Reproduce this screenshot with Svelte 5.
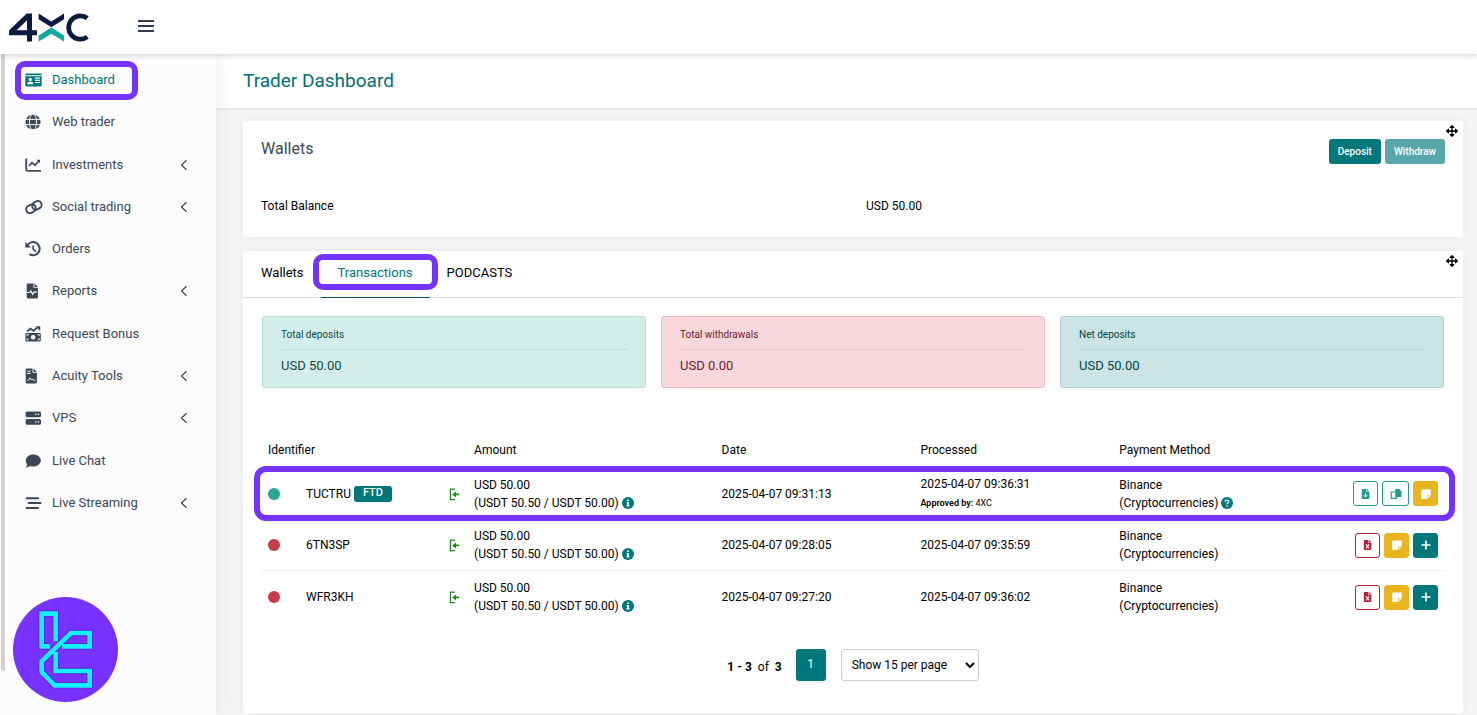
<script>
  const menu = [
    { label: 'Dashboard', icon: 'card', active: true },
    { label: 'Web trader', icon: 'globe' },
    { label: 'Investments', icon: 'chart', sub: true },
    { label: 'Social trading', icon: 'link', sub: true },
    { label: 'Orders', icon: 'history' },
    { label: 'Reports', icon: 'report', sub: true },
    { label: 'Request Bonus', icon: 'bonus' },
    { label: 'Acuity Tools', icon: 'contract', sub: true },
    { label: 'VPS', icon: 'server', sub: true },
    { label: 'Live Chat', icon: 'chat' },
    { label: 'Live Streaming', icon: 'lines', sub: true }
  ];
  const stats = [
    { label: 'Total deposits', value: 'USD 50.00', tone: 'green' },
    { label: 'Total withdrawals', value: 'USD 0.00', tone: 'red' },
    { label: 'Net deposits', value: 'USD 50.00', tone: 'teal' }
  ];
  const rows = [
    { id: 'TUCTRU', ok: true, date: '2025-04-07 09:31:13', processed: '2025-04-07 09:36:31', actions: ['download', 'copy', 'note'] },
    { id: '6TN3SP', date: '2025-04-07 09:28:05', processed: '2025-04-07 09:35:59', actions: ['cancel', 'note', 'add'] },
    { id: 'WFR3KH', date: '2025-04-07 09:27:20', processed: '2025-04-07 09:36:02', actions: ['cancel', 'note', 'add'] }
  ];
  const tabs = ['Wallets', 'Transactions', 'PODCASTS'];
  let tab = $state('Transactions');
</script>

{#snippet menuIcon(name)}
  <svg class="mi" viewBox="0 0 18 18" aria-hidden="true">
    {#if name === 'card'}
      <path fill="currentColor" d="M1.5 2.5h14a1.2 1.2 0 0 1 1.2 1.2v.6H.3v-.6a1.2 1.2 0 0 1 1.2-1.2zM.3 5.2h16.4v9a1.2 1.2 0 0 1-1.2 1.2h-14a1.2 1.2 0 0 1-1.2-1.2z" />
      <path fill="#fff" d="M10 6.6h4.8v1.1H10zM10 8.8h4.8v1.1H10zM10 11h4.8v1.1H10zM2.3 13.2c0-1.6 1-2.4 2.2-2.4h1.6c1.2 0 2.2.8 2.2 2.4z" />
      <circle cx="5.3" cy="8.5" r="1.7" fill="#fff" />
    {:else if name === 'globe'}
      <circle cx="8" cy="9" r="7.6" fill="currentColor" />
      <g fill="none" stroke="#fcfcfc" stroke-width="1"><ellipse cx="8" cy="9" rx="3.6" ry="8" /><path d="M0 6.4h16M0 11.6h16" /></g>
    {:else if name === 'chart'}
      <g fill="none" stroke="currentColor" stroke-width="1.8"><path d="M1.2 2.5v11q0 1.3 1.3 1.3H16" /><path stroke-width="1.7" d="M4 10l3-3.4 3 2.6 3.6-4" /></g>
      <path fill="currentColor" d="M11.6 3.8h3.4v3.4z" />
    {:else if name === 'link'}
      <g fill="none" stroke="currentColor" stroke-width="1.9" transform="rotate(-30 9 9)"><rect x=".6" y="5.200" width="9.800" height="7.600" rx="3.800" /><rect x="7.400" y="5.200" width="9.800" height="7.600" rx="3.800" /></g>
    {:else if name === 'history'}
      <g fill="none" stroke="currentColor" stroke-width="2"><path d="M2.2 5.6A6.6 6.6 0 1 1 4.4 14.2" /><path stroke-width="1.6" d="M8.2 5.4v4l2.8 2.2" /></g>
      <path fill="currentColor" d="M.3 2v5.6h5.6z" />
    {:else if name === 'report'}
      <path fill="currentColor" d="M3 1.5h5.5v4.3h4.4v9.5A1.3 1.3 0 0 1 11.6 16.6H3a1.3 1.3 0 0 1-1.3-1.3V2.8A1.3 1.3 0 0 1 3 1.5zM9.4 1.5l3.5 3.4H9.4z" />
      <path fill="none" stroke="#fcfcfc" stroke-width="1.2" d="M1.6 10.5h3l1.2-1.7 1.8 3.4 1.3-2h3" />
    {:else if name === 'bonus'}
      <path fill="none" stroke="currentColor" stroke-width="1.8" d="M2 6.4L5.4 3.6l3 2.2L12.6 2.4" />
      <path fill="currentColor" d="M10.5 1.2h4.7V6zM1.6 8h13a1.2 1.2 0 0 1 1.2 1.2v6a1.2 1.2 0 0 1-1.2 1.2h-13A1.2 1.2 0 0 1 .4 15.2V9.2A1.2 1.2 0 0 1 1.6 8z" />
      <circle cx="8.1" cy="12.2" r="2.3" fill="#fcfcfc" />
      <path fill="none" stroke="#fcfcfc" d="M2 11.2v-1.600h1.600M14.200 11.200v-1.600h-1.600M2 13.200v1.600h1.600M14.200 13.200v1.600h-1.600" />
    {:else if name === 'contract'}
      <path fill="currentColor" d="M2 1.500h5.500v4.300h4.400v9.500A1.300 1.300 0 0 1 10.600 16.600H2A1.300 1.300 0 0 1 .700 15.300V2.800A1.300 1.300 0 0 1 2 1.500zM8.400 1.500l3.500 3.400H8.400z" />
      <path fill="none" stroke="#fcfcfc" stroke-width="1" d="M2.200 4.200h3.400M2.200 6.400h3.400M2.400 13.300h1.200l1.400-2.400 1.600 2 1.200-.8 1 1.200h1.400" />
    {:else if name === 'server'}
      <rect x=".6" y="2.500" width="15.400" height="5.800" rx="1.500" fill="currentColor" />
      <rect x=".6" y="10" width="15.400" height="5.800" rx="1.500" fill="currentColor" />
      <path fill="#fcfcfc" d="M10.200 4.800h1.400v1.200h-1.400zM12.800 4.800h1.400v1.200h-1.400zM10.200 12.300h1.400v1.200h-1.400zM12.800 12.300h1.400v1.200h-1.400z" />
    {:else if name === 'chat'}
      <path fill="currentColor" d="M8.300 2.600c4.200 0 7.500 2.700 7.500 6s-3.300 6-7.500 6c-1.300 0-2.400-.2-3.400-.6-.9.700-2.400 1.500-4.400 1.500.900-1 1.700-2.200 1.800-3.200C1.300 11.300.8 10 .8 8.600c0-3.300 3.300-6 7.500-6z" />
    {:else}
      <path fill="none" stroke="currentColor" stroke-width="1.900" stroke-linecap="round" d="M1.600 4.200h11.600M3.600 9h12M1.600 14h11.600" />
    {/if}
  </svg>
{/snippet}

{#snippet actionIcon(name)}
  <svg class="ai" viewBox="0 0 12 12" aria-hidden="true">
    {#if name === 'download'}
      <path fill="currentColor" d="M2.800 1h3.600v3h3v6a1 1 0 0 1-1 1H2.800a1 1 0 0 1-1-1V2a1 1 0 0 1 1-1zM7 1l2.400 2.400H7z" />
      <path fill="none" stroke="#fff" stroke-width="1" d="M5.600 5v3.800M3.900 7.200l1.700 1.700 1.700-1.700" />
    {:else if name === 'copy'}
      <path fill="currentColor" d="M6 1h3.200L11.500 3.200v4.900a.8.8 0 0 1-.8.8H6a.8.8 0 0 1-.8-.8V1.800A.8.8 0 0 1 6 1z" />
      <path fill="none" stroke="currentColor" stroke-width="1.200" d="M5 4H1.200v6.400h5.200V8.800" />
    {:else if name === 'note'}
      <path fill="currentColor" d="M2.200 1.400h7.600a1 1 0 0 1 1 1V7H7.800a.8.8 0 0 0-.8.8v3.100H2.200a1 1 0 0 1-1-1V2.400a1 1 0 0 1 1-1zM10.800 7.600L7.700 10.700V7.600z" />
    {:else if name === 'cancel'}
      <path fill="currentColor" d="M2.800 1h3.600v3h3v6a1 1 0 0 1-1 1H2.800a1 1 0 0 1-1-1V2a1 1 0 0 1 1-1zM7 1l2.400 2.400H7z" />
      <path fill="none" stroke="#fff" stroke-width="1.100" d="M4 5.400l3.200 4M7.200 5.400L4 9.400" />
    {:else}
      <path fill="none" stroke="currentColor" stroke-width="1.600" d="M6 1.500v9M1.500 6h9" />
    {/if}
  </svg>
{/snippet}

{#snippet move()}
  <svg class="move" viewBox="0 0 512 512" aria-hidden="true"><path d="M352.201 425.775l-79.196 79.196c-9.373 9.373-24.568 9.373-33.941 0l-79.196-79.196c-15.119-15.119-4.411-40.971 16.971-40.970h51.162L228 284H127.196v51.162c0 21.382-25.851 32.090-40.971 16.971L7.029 272.937c-9.373-9.373-9.373-24.569 0-33.941L86.225 159.800c15.119-15.119 40.971-4.411 40.971 16.971V228H228V127.196h-51.230c-21.382 0-32.090-25.851-16.971-40.971l79.196-79.196c9.373-9.373 24.568-9.373 33.941 0l79.196 79.196c15.119 15.119 4.411 40.971-16.971 40.971h-51.162V228h100.804v-51.162c0-21.382 25.851-32.090 40.970-16.971l79.196 79.196c9.373 9.373 9.373 24.569 0 33.941L425.773 352.200c-15.119 15.119-40.971 4.411-40.970-16.971V284H284v100.804h51.230c21.382 0 32.090 25.851 16.971 40.971z" /></svg>
{/snippet}

<div class="app">
  <header>
    <a href="#home" aria-label="4XC home">
      <svg class="logo" viewBox="24 36 246 92" aria-hidden="true">
        <path fill="#0b1b3f" fill-rule="evenodd" d="M27 91L80 40h16v50h15v15H96v19H81v-19H27zM81 60L50 90h31z" />
        <path fill="#0b1b3f" d="M116 40l38 24 38-24v17l-38 24-38-24z" />
        <path fill="#0fa8a0" d="M116 124v-18l38-24 38 24v18l-38-23z" />
        <path fill="none" stroke="#0b1b3f" stroke-width="14" d="M262 54A35 35 0 1 0 262 110" />
      </svg>
    </a>
    <button class="burger" aria-label="Toggle menu"><span></span><span></span><span></span></button>
  </header>

  <div class="body">
    <nav>
      <i class="scroll"></i>
      <ul>
        {#each menu as m}
          <li>
            <a href="#menu" class:active={m.active}>
              {@render menuIcon(m.icon)}
              <span>{m.label}</span>
              {#if m.sub}<svg class="chev" viewBox="0 0 8 12" aria-hidden="true"><path fill="none" stroke="currentColor" stroke-width="1.200" d="M6.500 1.200L1.500 6l5 4.800" /></svg>{/if}
            </a>
          </li>
        {/each}
      </ul>
      <svg class="badge" viewBox="39 51 315 315" aria-hidden="true">
        <circle cx="196.500" cy="208.500" r="157.500" fill="#7832ff" />
        <g fill="none" stroke="#5a22d8" stroke-width="19">
          <path d="M167 180V101H125V199H146" /><path d="M188 199H269V159H213L125 244V276L164 316H269V273H167V218" />
        </g>
        <g fill="none" stroke="#14f0ff" stroke-width="14">
          <path d="M167 184V101H125V199H150" /><path d="M186 199H269V159H213L125 244V276L164 316H269V273H167V216" />
        </g>
      </svg>
    </nav>

    <main>
      <h1>Trader Dashboard</h1>
      <div class="content">
        <section class="card wallets">
          {@render move()}
          <div class="top">
            <h2>Wallets</h2>
            <div class="btns"><button>Deposit</button><button class="soft">Withdraw</button></div>
          </div>
          <div class="balance"><span>Total Balance</span><span>USD 50.00</span></div>
        </section>

        <section class="card">
          {@render move()}
          <div class="tabs" role="tablist">
            {#each tabs as t}
              <button role="tab" aria-selected={tab === t} class:on={tab === t} onclick={() => (tab = t)}>{t}</button>
            {/each}
          </div>
          <div class="pane">
            <div class="stats">
              {#each stats as s}
                <div class="stat {s.tone}"><small>{s.label}</small><strong>{s.value}</strong></div>
              {/each}
            </div>
            <table>
              <colgroup><col class="c-dot" /><col class="c-id" /><col class="c-in" /><col class="c-amt" /><col class="c-date" /><col class="c-date" /><col /><col class="c-act" /></colgroup>
              <thead>
                <tr><th colspan="3">Identifier</th><th>Amount</th><th>Date</th><th>Processed</th><th colspan="2">Payment Method</th></tr>
              </thead>
              <tbody>
                {#each rows as r}
                  <tr class:marked={r.ok}>
                    <td><i class="dot" class:ok={r.ok}></i></td>
                    <td>{r.id}{#if r.ok}&nbsp;<b class="ftd">FTD</b>{/if}</td>
                    <td><svg class="in" viewBox="0 0 11 13" aria-hidden="true"><path fill="none" stroke="#1d8a1d" stroke-width="1.200" d="M6 1.200H1.400v10.400H6" /><path fill="#1d8a1d" d="M3.200 6.400L7 3.400v2.200h3v1.700H7v2.200z" /></svg></td>
                    <td>USD 50.00<br />(USDT 50.50 / USDT 50.00)
                      <svg class="info" viewBox="0 0 12 12" aria-hidden="true"><circle cx="6" cy="6" r="6" fill="#00777b" /><path fill="#fff" d="M5.200 2.500h1.700v1.500H5.200zM4.500 5h2.400v3.300h.700v1.100H4.400V8.300h.8V6.100h-.7z" /></svg></td>
                    <td>{r.date}</td>
                    <td>{r.processed}{#if r.ok}<br /><small><b>Approved by:</b> 4XC</small>{/if}</td>
                    <td>Binance<br />(Cryptocurrencies)
                      {#if r.ok}<svg class="info" viewBox="0 0 12 12" aria-hidden="true"><circle cx="6" cy="6" r="6" fill="#00777b" /><path fill="none" stroke="#fff" stroke-width="1.300" d="M4.200 4.700c0-2 3.600-2 3.600 0C7.800 5.900 6 5.800 6 7.200" /><circle cx="6" cy="9" r=".8" fill="#fff" /></svg>{/if}</td>
                    <td><div class="acts">
                      {#each r.actions as a}<button class={a} aria-label={a}>{@render actionIcon(a)}</button>{/each}
                    </div></td>
                  </tr>
                {/each}
              </tbody>
            </table>
            <div class="pager">
              <span><b>1 - 3</b>&nbsp; of &nbsp;<b>3</b></span>
              <button class="page">1</button>
              <select aria-label="Rows per page"><option>Show 15 per page</option></select>
            </div>
          </div>
        </section>
      </div>
    </main>
  </div>
</div>

<style>
  :global(body) { margin: 0; background: #f5f5f5; overflow: hidden; }
  .app { display: flex; flex-direction: column; min-height: 100vh; font: 12px/18px Roboto, sans-serif; color: #000; }
  button, select { font: inherit; margin: 0; cursor: pointer; }
  header { display: flex; align-items: center; gap: 48px; height: 54px; padding-left: 8px; background: #fff; box-shadow: 0 1px 6px rgba(0, 0, 0, .2); position: relative; z-index: 2; }
  .logo { display: block; width: 82px; height: 31px; }
  .burger { display: flex; flex-direction: column; justify-content: space-between; width: 16px; height: 12px; padding: 0; border: 0; background: none; margin-bottom: 2px; }
  .burger span { height: 2px; background: #323b54; }
  .body { display: flex; flex: 1; }

  nav { position: relative; flex: 0 0 216px; background: #fcfcfc; box-shadow: 0 0 20px rgba(0, 0, 0, .08); z-index: 1; }
  .scroll { position: absolute; left: 1px; top: 0; width: 4px; height: 617px; background: #d2d2d2; border-radius: 0 0 2px 2px; }
  ul { list-style: none; margin: 0; padding: 5px 0 0; display: grid; grid-auto-rows: 1fr; min-height: 465px; }
  li { display: grid; }
  nav a { position: relative; display: flex; align-items: center; padding: 0 28px 0 25px; color: #3b4757; font-size: 13px; text-decoration: none; }
  nav a span { flex: 1; }
  nav a.active { color: #00777b; }
  nav a.active::after { content: ''; position: absolute; left: 15px; top: 2px; width: 111px; height: 27px; border: 6px solid #7433ff; border-radius: 10px; }
  .mi { width: 18px; height: 18px; margin-right: 9px; }
  .chev { width: 8px; height: 12px; }
  .badge { position: absolute; left: 13px; top: 543px; width: 105px; height: 105px; }

  main { flex: 1; min-width: 0; }
  h1 { margin: 0; padding: 0 27px; line-height: 54px; font-size: 19px; font-weight: 400; color: #006f73; background: #fff; box-shadow: 0 1px 2px rgba(0, 0, 0, .1); }
  .content { display: grid; gap: 14px; padding: 13px 14px 1px 27px; }
  .card { position: relative; background: #fff; border-radius: 3px; box-shadow: 0 0 12px rgba(0, 0, 0, .05); }
  .move { position: absolute; right: 5px; top: 4px; width: 12px; height: 12px; }
  .wallets { padding: 18px; box-sizing: border-box; min-height: 116px; }
  .top { display: flex; justify-content: space-between; align-items: flex-start; }
  h2 { margin: 0; font-size: 16px; line-height: 20px; font-weight: 400; color: #3c4a4e; }
  .btns { display: flex; gap: 4px; }
  .btns button { height: 25px; padding: 0 9px; border: 0; border-radius: 3px; background: #00777b; color: #fff; font-size: 10px; font-weight: 500; }
  .btns .soft { background: #59a7aa; }
  .balance { display: grid; grid-template-columns: 1fr 1fr; gap: 26px; padding-top: 33px; }

  .tabs { display: flex; height: 46px; padding-left: 1px; border-bottom: 1px solid #dcdfe0; }
  .tabs button { position: relative; padding: 0 17px 2px; border: 0; background: none; font-size: 13px; color: #000; }
  .tabs .on { color: #00777b; }
  .tabs .on::before { content: ''; position: absolute; left: 0; right: 0; bottom: -1px; height: 1px; background: #00595c; }
  .tabs .on::after { content: ''; position: absolute; left: -8px; right: -8px; top: 3px; height: 24px; border: 6px solid #7433ff; border-radius: 10px; }
  .pane { padding: 18px; }
  .stats { display: grid; grid-template-columns: repeat(3, 1fr); gap: 15px; margin: 0 1px; }
  .stat { display: flex; flex-direction: column; box-sizing: border-box; min-height: 72px; padding: 9px 18px; border: 1px solid; border-radius: 3px; }
  .stat small { font-size: 10px; padding-bottom: 5px; border-bottom: 1px solid rgba(0, 0, 0, .08); }
  .stat strong { font-size: 13px; font-weight: 400; padding-top: 7px; }
  .green { background: #d4ede9; border-color: #b8e0da; color: #0d4a43; }
  .red { background: #f8d8dd; border-color: #f1bcc4; color: #6e1a28; }
  .teal { background: #cce4e5; border-color: #a8d0d2; color: #00474a; }

  table { width: 100%; margin-top: 45px; table-layout: fixed; border-collapse: collapse; }
  .c-dot { width: 38px; }
  .c-id { width: 12%; }
  .c-in { width: 26px; }
  .c-amt { width: 20.9%; }
  .c-date { width: 16.8%; }
  .c-act { width: 104px; }
  th { font-weight: 400; text-align: left; padding: 8px 7px; }
  td { padding: 8px 7px 7px; vertical-align: middle; height: 36px; }
  td:nth-child(3) { padding: 0 0 0 8px; }
  tr { position: relative; }
  tbody tr + tr + tr { border-top: 1px solid #eee; }
  .marked td:last-child::after { content: ''; position: absolute; left: -7px; right: -10px; top: -1px; height: 43px; border: 6px solid #7433ff; border-radius: 12px; pointer-events: none; }
  .dot { display: block; width: 12px; height: 12px; border-radius: 50%; background: #cb3a48; }
  .dot.ok { background: #26a693; }
  .ftd { display: inline-block; height: 16px; line-height: 14px; padding: 0 9px; border-radius: 3px; background: #00777b; color: #fff; font-size: 11px; font-weight: 500; vertical-align: middle; }
  .in { display: block; width: 11px; height: 13px; margin-top: 2px; }
  .info { width: 12px; height: 12px; vertical-align: -2px; }
  td small { font-size: 9px; }
  td small b { font-weight: 600; }
  .acts { display: flex; justify-content: flex-end; gap: 4px; }
  .acts button { display: grid; place-items: center; width: 25px; height: 25px; padding: 0; border: 1px solid; border-radius: 3px; background: #fff; }
  .ai { width: 12px; height: 12px; }
  .acts .download, .acts .copy { color: #26998e; }
  .acts .copy { width: 27px; }
  .acts .cancel { color: #b5203c; }
  .acts .note { background: #e8b521; border-color: #e8b521; color: #fff; }
  .acts .add { background: #00777b; border-color: #00777b; color: #fff; }

  .pager { display: flex; justify-content: center; align-items: center; margin-top: 27px; padding-bottom: 14px; }
  .pager span { padding-top: 4px; }
  .page { width: 30px; height: 32px; margin: 0 15px 0 14px; padding: 0 0 2px; border: 0; border-radius: 3px; background: #00777b; color: #fff; }
  select { width: 138px; height: 32px; padding: 0 6px; border: 1px solid #ccc; border-radius: 3px; background: #fff; color: #000; }
</style>
